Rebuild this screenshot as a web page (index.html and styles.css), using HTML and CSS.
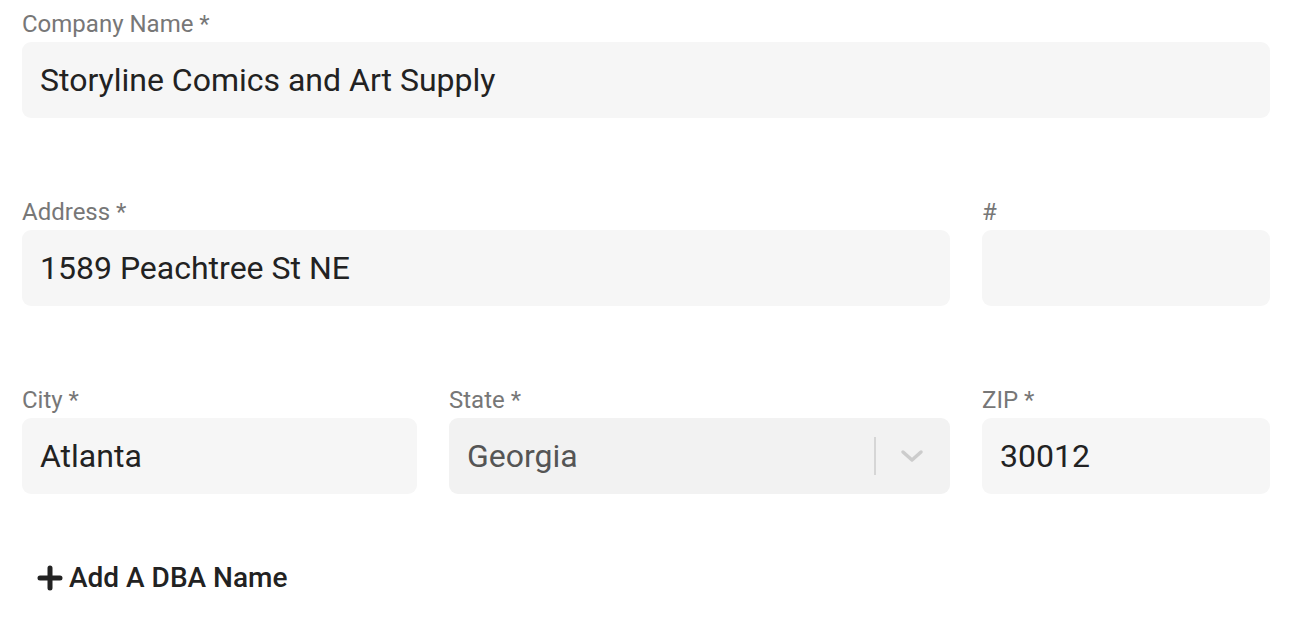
FILE: index.html
```html
<!DOCTYPE html>
<html lang="en">
<head>
    <meta charset="UTF-8">
    <title>Company Info</title>
    <link rel="stylesheet" href="styles.css">
</head>
<body>
    <form class="company-form">
        <div class="form-row">
            <div class="field">
                <label class="field-label">Company Name *</label>
                <div class="field-input">Storyline Comics and Art Supply</div>
            </div>
        </div>

        <div class="form-row row-address">
            <div class="field">
                <label class="field-label">Address *</label>
                <div class="field-input">1589 Peachtree St NE</div>
            </div>
            <div class="field">
                <label class="field-label">#</label>
                <div class="field-input"></div>
            </div>
        </div>

        <div class="form-row row-city">
            <div class="field">
                <label class="field-label">City *</label>
                <div class="field-input">Atlanta</div>
            </div>
            <div class="field">
                <label class="field-label">State *</label>
                <div class="field-input select">
                    <span class="select-value">Georgia</span>
                    <span class="select-divider"></span>
                    <svg class="select-chevron" width="24" height="14" viewBox="0 0 24 14">
                        <path d="M3 3 L12 11 L21 3" fill="none" stroke="#cccccc" stroke-width="3.5" stroke-linecap="round" stroke-linejoin="round"/>
                    </svg>
                </div>
            </div>
            <div class="field">
                <label class="field-label">ZIP *</label>
                <div class="field-input">30012</div>
            </div>
        </div>

        <button type="button" class="add-dba">
            <svg width="26" height="26" viewBox="0 0 26 26">
                <path d="M13 3 V23 M3 13 H23" stroke="#222222" stroke-width="5" stroke-linecap="round"/>
            </svg>
            <span>Add A DBA Name</span>
        </button>
    </form>
</body>
</html>
```

FILE: styles.css
```css
body {
    margin: 0;
    background: #ffffff;
    font-family: Roboto, "Noto Sans", "Liberation Sans", sans-serif;
    color: #222222;
}

.company-form {
    padding: 10px 44px 0 22px;
    display: flex;
    flex-direction: column;
    gap: 80px;
}

.form-row {
    display: grid;
    grid-template-columns: 1fr;
    column-gap: 32px;
}

.row-address {
    grid-template-columns: 1fr 288px;
}

.row-city {
    grid-template-columns: 395px 1fr 288px;
}

.field {
    display: flex;
    flex-direction: column;
    gap: 4px;
}

.field-label {
    font-size: 24px;
    line-height: 28px;
    height: 28px;
    color: #777777;
}

.field-input {
    height: 76px;
    box-sizing: border-box;
    padding: 0 18px;
    background: #f6f6f6;
    border-radius: 9px;
    display: flex;
    align-items: center;
    font-size: 32px;
    color: #222222;
}

.select {
    background: #f2f2f2;
    color: #555555;
}

.select-value {
    flex: 1;
}

.select-divider {
    width: 2px;
    height: 38px;
    background: #d6d6d6;
    margin-right: 24px;
}

.select-chevron {
    margin-right: 8px;
}

.add-dba {
    margin-top: -12px;
    align-self: flex-start;
    display: flex;
    align-items: center;
    gap: 6px;
    padding: 0 0 0 15px;
    border: none;
    background: transparent;
    font-family: inherit;
    font-size: 28px;
    font-weight: 500;
    line-height: 32px;
    color: #222222;
    cursor: pointer;
}
```
